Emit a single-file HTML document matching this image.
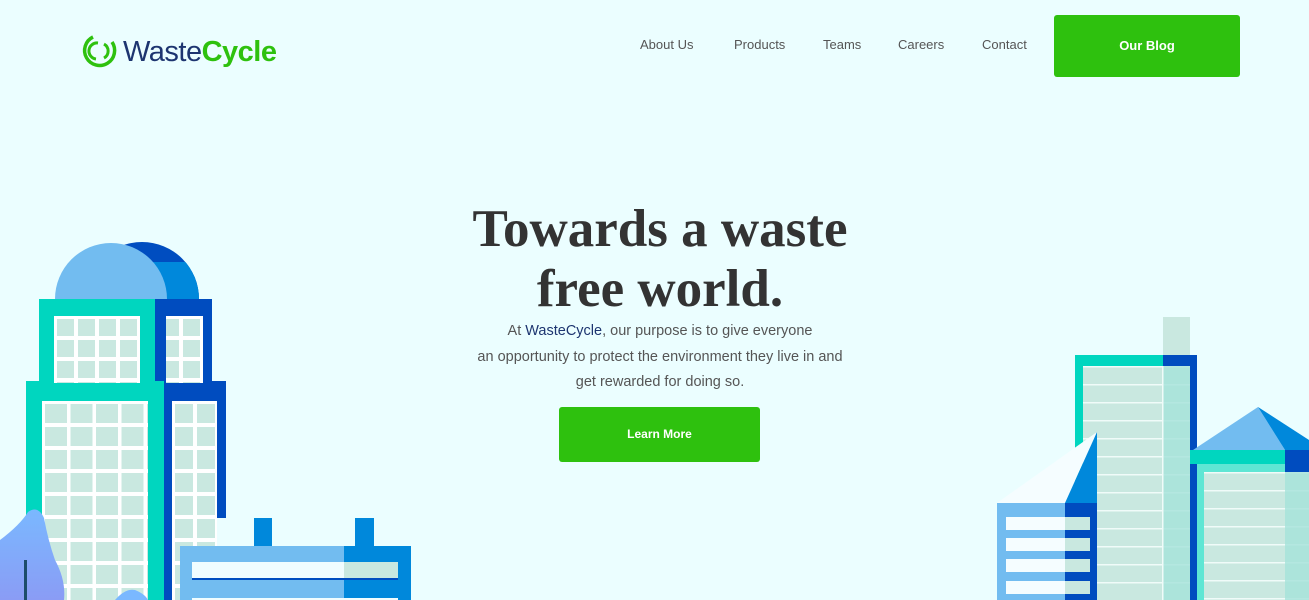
<!DOCTYPE html>
<html><head><meta charset="utf-8"><style>
*{margin:0;padding:0;box-sizing:border-box}
body{width:1309px;height:600px;overflow:hidden;background:#ebfeff;font-family:"Liberation Sans",sans-serif;position:relative}
.nav a{position:absolute;top:37px;font-size:13px;color:#555;text-decoration:none}
.btn{position:absolute;background:#2ec10e;color:#fff;font-weight:bold;font-size:13px;border-radius:3px;display:flex;align-items:center;justify-content:center}
h1{position:absolute;left:330px;width:660px;top:199px;text-align:center;font-family:"Liberation Serif",serif;font-weight:bold;font-size:53px;line-height:60px;color:#333}
p{position:absolute;left:380px;width:560px;top:319px;text-align:center;font-size:14.5px;line-height:25.5px;color:#555}
svg{position:absolute;left:0;top:0}
</style></head><body>
<svg width="1309" height="600">
<path d="M93 37 A15 15 0 1 0 112 42" fill="none" stroke="#2ec10e" stroke-width="3.5"/>
<path d="M96 59 A8 8 0 0 1 98 43 M104 44 A8 8 0 0 1 104 58" fill="none" stroke="#2ec10e" stroke-width="3"/>
<text x="123" y="61" font-family="Liberation Sans" font-size="29" fill="#1d3570" letter-spacing="-0.5">Waste<tspan fill="#2ec10e" font-weight="bold">Cycle</tspan></text>
<defs>
<clipPath id="dm"><rect x="0" y="0" width="400" height="299"/></clipPath>
<clipPath id="lo"><rect x="0" y="262" width="400" height="37"/></clipPath>
<pattern id="g1" x="54" y="316" width="21" height="21" patternUnits="userSpaceOnUse"><rect width="21" height="21" fill="#fff"/><rect x="3" y="3" width="17" height="17" fill="#c9e8e0"/></pattern>
<pattern id="g2" x="42" y="401" width="25.5" height="23" patternUnits="userSpaceOnUse"><rect width="26" height="23" fill="#fff"/><rect x="3" y="3" width="22" height="19" fill="#c9e8e0"/></pattern>
<pattern id="g3" x="172" y="401" width="22" height="23" patternUnits="userSpaceOnUse"><rect width="22" height="23" fill="#fff"/><rect x="3" y="3" width="18" height="19" fill="#c9e8e0"/></pattern>
<pattern id="h1" x="1083" y="366" width="80" height="18" patternUnits="userSpaceOnUse"><rect width="80" height="18" fill="#c9e8e0"/><rect width="80" height="1.5" fill="#f0fbf9"/></pattern>
<pattern id="h2" x="1204" y="472" width="110" height="18" patternUnits="userSpaceOnUse"><rect width="110" height="18" fill="#c9e8e0"/><rect width="110" height="1.5" fill="#f0fbf9"/></pattern>
<linearGradient id="tr" x1="0" y1="0" x2="0" y2="1"><stop offset="0" stop-color="#7ab8ff"/><stop offset="1" stop-color="#8a9cf5"/></linearGradient>
</defs>
<g clip-path="url(#dm)">
<circle cx="142" cy="299" r="57" fill="#004dc0"/>
<circle cx="142" cy="299" r="57" fill="#0088db" clip-path="url(#lo)"/>
<circle cx="111" cy="299" r="56" fill="#72bcf0"/>
</g>
<rect x="39" y="299" width="116" height="83" fill="#00d6bf"/>
<rect x="155" y="299" width="57" height="83" fill="#004cbf"/>
<rect x="26" y="381" width="138" height="219" fill="#00d6bf"/>
<rect x="164" y="381" width="62" height="137" fill="#004cbf"/>
<rect x="164" y="518" width="8" height="82" fill="#004cbf"/>
<rect x="54" y="316" width="86" height="67" fill="url(#g1)"/>
<rect x="166" y="316" width="37" height="67" fill="url(#g1)"/>
<rect x="42" y="401" width="106" height="199" fill="url(#g2)"/>
<rect x="172" y="401" width="45" height="199" fill="url(#g3)"/>
<rect x="254" y="518" width="18" height="30" fill="#0088db"/>
<rect x="355" y="518" width="19" height="30" fill="#0088db"/>
<rect x="180" y="546" width="164" height="54" fill="#72bcf0"/>
<rect x="344" y="546" width="67" height="54" fill="#0088db"/>
<rect x="192" y="562" width="206" height="16" fill="#f0fdff"/>
<rect x="344" y="562" width="54" height="16" fill="#c9e8e0"/>
<rect x="192" y="578" width="206" height="2" fill="#004dc0"/>
<rect x="192" y="598" width="206" height="2" fill="#f0fdff"/>
<path d="M0 540 Q20 525 28 512 Q38 505 44 518 Q48 540 55 560 Q66 580 64 600 H0Z" fill="url(#tr)"/>
<rect x="24" y="560" width="3" height="40" fill="#1d4d6a"/>
<path d="M115 600 Q125 588 135 590 Q145 594 148 600Z" fill="#7ab8ff"/>
<rect x="1163" y="317" width="27" height="39" fill="#c9e8e0"/>
<rect x="1075" y="355" width="88" height="245" fill="#00d6bf"/>
<rect x="1163" y="355" width="34" height="245" fill="#004cbf"/>
<rect x="1083" y="366" width="107" height="234" fill="url(#h1)"/>
<rect x="1163" y="366" width="27" height="234" fill="#a5e2da" opacity=".8"/>
<rect x="1162" y="366" width="1.5" height="234" fill="#f0fbf9"/>
<path d="M997 503 L1097 432 L1065 503Z" fill="#f5fdff"/>
<path d="M1065 503 L1097 432 L1097 503Z" fill="#0088db"/>
<rect x="997" y="503" width="68" height="97" fill="#72bcf0"/>
<rect x="1065" y="503" width="32" height="97" fill="#004cbf"/>
<g fill="#f5fdff"><rect x="1006" y="517" width="84" height="13"/><rect x="1006" y="538" width="84" height="13"/><rect x="1006" y="559" width="84" height="13"/><rect x="1006" y="581" width="84" height="13"/></g>
<g fill="#c9e8e0"><rect x="1065" y="517" width="25" height="13"/><rect x="1065" y="538" width="25" height="13"/><rect x="1065" y="559" width="25" height="13"/><rect x="1065" y="581" width="25" height="13"/></g>
<path d="M1193 450 L1258 407 L1285 450Z" fill="#72bcf0"/>
<path d="M1258 407 L1309 440 V450 H1285Z" fill="#0088db"/>
<rect x="1190" y="450" width="95" height="14" fill="#00d6bf"/>
<rect x="1285" y="450" width="24" height="22" fill="#004cbf"/>
<rect x="1197" y="464" width="88" height="136" fill="#5ee6d4"/>
<rect x="1204" y="472" width="105" height="128" fill="url(#h2)"/>
<rect x="1285" y="472" width="24" height="128" fill="#a5e2da" opacity=".8"/>
</svg>
<div class="nav"><a style="left:640px">About Us</a><a style="left:734px">Products</a><a style="left:823px">Teams</a><a style="left:898px">Careers</a><a style="left:982px">Contact</a></div>
<div class="btn" style="left:1054px;top:15px;width:186px;height:62px;padding-bottom:2px">Our Blog</div>
<h1>Towards a waste<br>free world.</h1>
<p>At <span style="color:#1d3570">WasteCycle</span>, our purpose is to give everyone<br>an opportunity to protect the environment they live in and<br>get rewarded for doing so.</p>
<div class="btn" style="left:559px;top:407px;width:201px;height:55px;font-size:12px;padding-bottom:2px">Learn More</div>
</body></html>
